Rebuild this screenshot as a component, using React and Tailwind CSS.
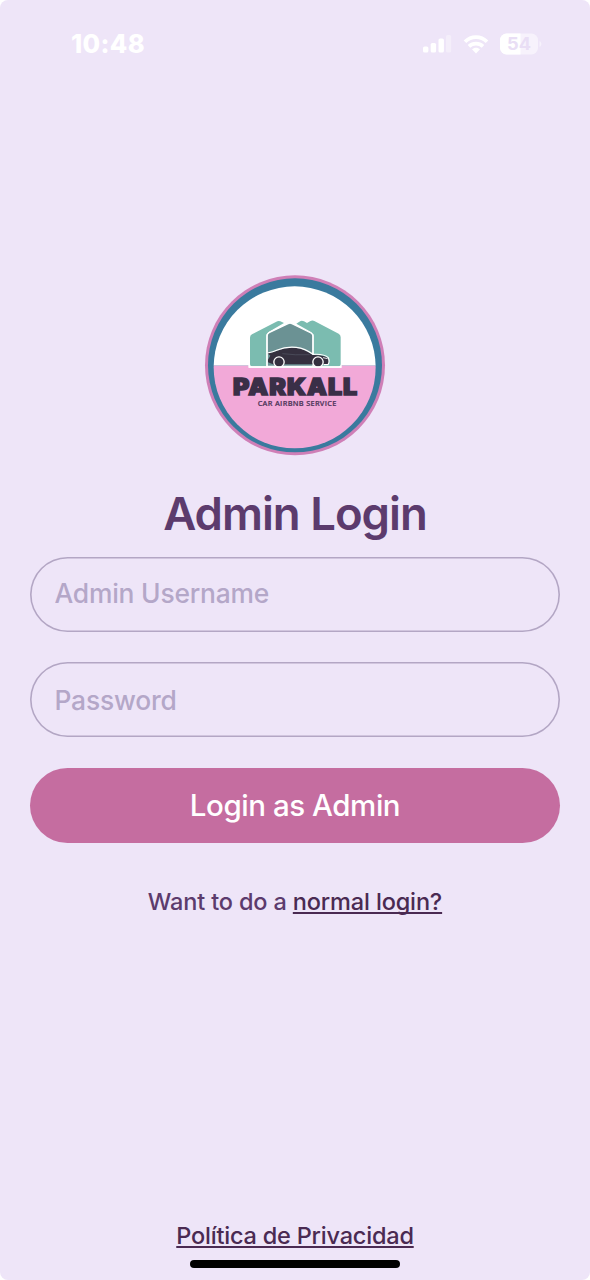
import React from "react";

function Signal() {
  return (
    <svg className="h-[20px] w-[30px]" viewBox="0 0 30 20" fill="#fff">
      <rect x="1" y="12.5" width="5.4" height="6" rx="1.6" />
      <rect x="8.7" y="9" width="5.4" height="9.5" rx="1.6" />
      <rect x="16.5" y="4.5" width="5.4" height="14" rx="1.6" />
      <rect x="24" y="1" width="5.2" height="17.5" rx="1.6" opacity="0.35" />
    </svg>
  );
}

function Wifi() {
  return (
    <svg className="h-[20px] w-[26px]" viewBox="0 0 26 20" fill="none" stroke="#fff" strokeWidth="3.7">
      <path d="M2 7.8C8.2 1.6 17.8 1.6 24 7.8" />
      <path d="M6 12.4C10 8.7 16 8.7 20 12.4" />
      <path d="M13 19.4L9 15.3C11.2 13.1 14.8 13.1 17 15.3Z" fill="#fff" stroke="none" />
    </svg>
  );
}

function Battery() {
  return (
    <svg className="h-[22px] w-[44px]" viewBox="0 0 44 22">
      <defs>
        <clipPath id="charge">
          <rect x="0" y="0" width="20.5" height="22" />
        </clipPath>
      </defs>
      <rect x="0" y="0.5" width="38" height="21" rx="6.5" fill="#fff" opacity="0.5" />
      <rect x="0" y="0.5" width="38" height="21" rx="6.5" fill="#fff" clipPath="url(#charge)" />
      <path d="M39.5 8C42 8.8 42 13.2 39.5 14Z" fill="#fff" opacity="0.5" />
      <text
        x="7"
        y="17.2"
        fontFamily="Inter, sans-serif"
        fontWeight="700"
        fontSize="17.5"
        textLength="24"
        lengthAdjust="spacingAndGlyphs"
        fill="#e9def5"
      >
        54
      </text>
    </svg>
  );
}

function Logo() {
  return (
    <svg className="size-[200px]" viewBox="0 0 600 600">
      <defs>
        <clipPath id="disc">
          <circle cx="299" cy="307" r="243" />
        </clipPath>
      </defs>
      <circle cx="300" cy="301" r="270" fill="#cf7fb7" />
      <circle cx="300" cy="301" r="261" fill="#3a7a9e" />
      <g clipPath="url(#disc)">
        <rect width="600" height="302" fill="#fff" />
        <rect y="302" width="600" height="300" fill="#f2a9d8" />
      </g>
      <path d="M160 308V209L247 165L265 172L300 175L320 165L338 171L352 165L440 209V308Z" fill="#fff" />
      <path
        d="M171 304Q165 304 165 298V218Q165 211 171 208L244 170Q250 166 256 169L267 174L222 200Q216 204 216 211V304Z"
        fill="#7bbcb0"
      />
      <path
        d="M354 304V211Q354 204 348 201L304 176L313 170Q320 165 327 169L336 174L345 169Q352 165 358 168L431 206Q437 210 437 217V298Q437 304 431 304Z"
        fill="#7bbcb0"
      />
      <path
        d="M216 304V213Q216 207 222 203L279 176Q285 172 291 176L348 204Q354 208 354 214V304Z"
        fill="#6b9294"
        stroke="#fff"
        strokeWidth="4"
      />
      <path
        d="M234 298L219 292V284L226 272L218 265Q234 262 247 257Q272 246 304 249Q329 252 353 270Q387 269 398 279Q404 290 399 298Z"
        fill="#35303f"
      />
      <path
        d="M218 264Q234 261 247 255Q272 244 304 247Q330 250 354 268Q388 266 400 278Q405 290 399 299H386"
        fill="none"
        stroke="#fff"
        strokeWidth="3.5"
        strokeLinejoin="round"
      />
      <path d="M262 266Q300 271 344 269" fill="none" stroke="#5d6270" strokeWidth="1.5" />
      <path d="M384 278L398 281" stroke="#fff" strokeWidth="2.5" />
      <circle cx="252" cy="291" r="15.5" fill="#35303f" stroke="#fff" strokeWidth="4" />
      <circle cx="369" cy="291" r="15.5" fill="#35303f" stroke="#fff" strokeWidth="4" />
      <path d="M354 208V268M216 208V304" stroke="#fff" strokeWidth="4" />
      <path d="M162 306H439" stroke="#fff" strokeWidth="4" />
      <text
        x="114"
        y="389"
        fontFamily="Inter, sans-serif"
        fontWeight="900"
        fontSize="68"
        letterSpacing="3"
        textLength="376"
        lengthAdjust="spacingAndGlyphs"
        fill="#3a2f47"
        stroke="#3a2f47"
        strokeWidth="4.5"
      >
        PARKALL
      </text>
      <text x="188" y="423" fontFamily="'Open Sans', sans-serif" fontWeight="600" fontSize="22" textLength="236" fill="#4d3558" stroke="#4d3558" strokeWidth="0.6">
        CAR AIRBNB SERVICE
      </text>
    </svg>
  );
}

export default function App() {
  return (
    <div className="flex h-[1280px] w-[590px] flex-col items-center bg-white font-['Inter',sans-serif]">
      <main className="flex h-full w-full flex-col items-center rounded-[8px] bg-[#eee5f8]">
        <header className="flex h-[88px] w-full shrink-0 items-center justify-between pr-[46px] pl-[71px]">
          <span className="pt-px text-[25.5px] font-extrabold tracking-[0.3px] text-white">10:48</span>
          <div className="flex items-center gap-[11px]">
            <Signal />
            <Wifi />
            <Battery />
          </div>
        </header>

        <div className="mt-[177px] h-[200px] shrink-0">
          <Logo />
        </div>

        <h1 className="mt-[20px] h-[58px] text-[45.5px] leading-[58px] font-semibold tracking-[-1px] whitespace-nowrap text-[#5c3b6d]">
          Admin Login
        </h1>

        <form className="mt-[14px] flex w-full flex-col px-[30px]">
          <input
            className="h-[75px] w-full rounded-full bg-transparent px-[24.5px] pb-[3px] text-[26.4px] font-medium tracking-[-0.2px] shadow-[inset_0_0_0_1.6px_#b3a6c4] outline-none placeholder:text-[#b4a7c8]"
            placeholder="Admin Username"
          />
          <input
            type="password"
            className="mt-[30px] h-[75px] w-full rounded-full bg-transparent px-[24.5px] text-[26.4px] font-medium tracking-[-0.2px] shadow-[inset_0_0_0_1.6px_#b3a6c4] outline-none placeholder:text-[#b4a7c8]"
            placeholder="Password"
          />
          <button
            type="button"
            className="mt-[31px] h-[75px] w-full rounded-full bg-[#c56da0] text-[29.5px] font-medium tracking-[-0.45px] text-white"
          >
            Login as Admin
          </button>
        </form>

        <p className="mt-[43px] text-[23.5px] leading-[32px] font-medium tracking-[-0.15px] whitespace-nowrap text-[#5c3b6d]">
          Want to do a{" "}
          <a className="text-[#4a2a52] underline decoration-2 underline-offset-[2px] [text-decoration-skip-ink:none]">
            normal login?
          </a>
        </p>

        <footer className="mt-auto flex flex-col items-center pb-[12px]">
          <a className="text-[23.5px] leading-[32px] font-medium tracking-[-0.2px] whitespace-nowrap text-[#4a2a52] underline decoration-2 underline-offset-[2px] [text-decoration-skip-ink:none]">
            Política de Privacidad
          </a>
          <div className="mt-[8px] h-[8px] w-[210px] rounded-full bg-black" />
        </footer>
      </main>
    </div>
  );
}
